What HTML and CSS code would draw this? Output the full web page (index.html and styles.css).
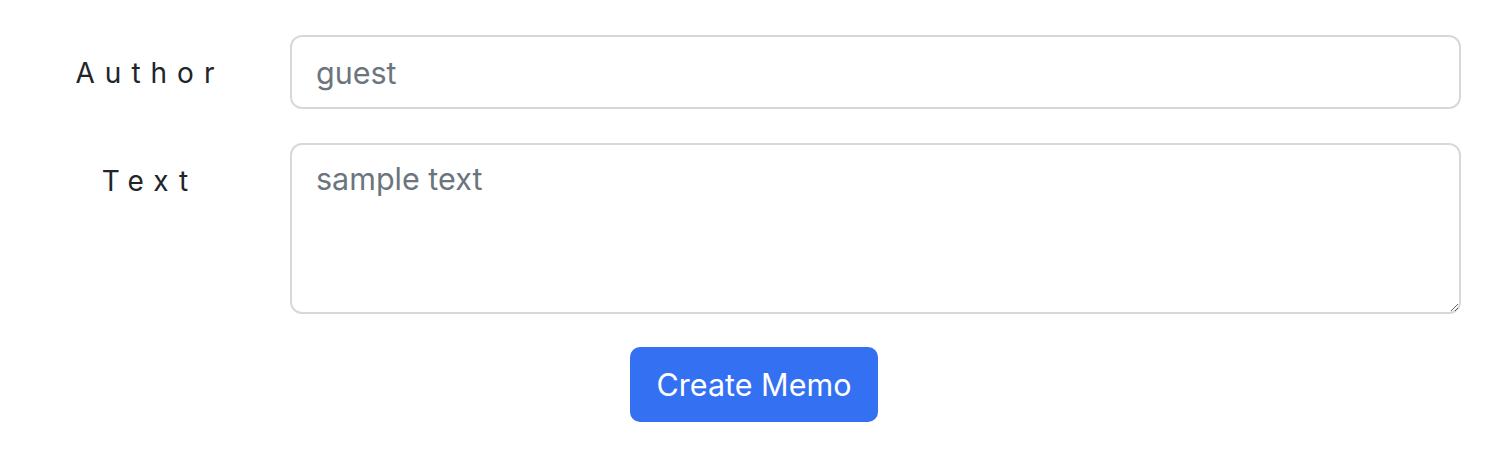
FILE: index.html
```html
<!DOCTYPE html>
<html lang="en">
<head>
<meta charset="utf-8">
<title>Create Memo</title>
<link rel="stylesheet" href="styles.css">
</head>
<body>
<form class="memo-form">
  <div class="row">
    <label class="label label-mid" for="author">Author</label>
    <input class="field" id="author" type="text" placeholder="guest">
  </div>
  <div class="row">
    <label class="label label-top" for="text">Text</label>
    <textarea class="field area" id="text" placeholder="sample text"></textarea>
  </div>
  <div class="actions">
    <button class="btn" type="button">Create Memo</button>
  </div>
</form>
</body>
</html>
```

FILE: styles.css
```css
html, body {
  margin: 0;
  padding: 0;
  background: #ffffff;
}

body {
  font-family: "Inter", "Liberation Sans", sans-serif;
  color: #212529;
}

.memo-form {
  display: flex;
  flex-direction: column;
  gap: 34px;
  padding: 35px 0 0 0;
}

.row {
  display: grid;
  grid-template-columns: 290px 1fr;
  padding-right: 45px;
}

.label {
  font-size: 28px;
  letter-spacing: 10px;
  text-indent: 10px;
  text-align: center;
  color: #212529;
  line-height: 1.5;
}

.label-mid {
  align-self: center;
  padding-top: 1px;
}

.label-top {
  padding-top: 17px;
}

.field {
  box-sizing: border-box;
  width: 100%;
  font-family: inherit;
  font-size: 30.5px;
  line-height: 1.5;
  color: #212529;
  background: #fff;
  border: 2px solid #d6d9dc;
  border-radius: 12px;
  padding: 12px 24px;
  outline: none;
  margin: 0;
}

.field::placeholder {
  color: #6c757d;
  opacity: 1;
}

input.field {
  height: 74px;
}

.area {
  height: 171px;
  resize: vertical;
  display: block;
  padding-top: 11px;
}

.actions {
  display: flex;
  justify-content: center;
  padding-left: 2px;
  margin-top: -1px;
}

.btn {
  font-family: inherit;
  font-size: 30.5px;
  line-height: 1.5;
  color: #ffffff;
  background: #3370f2;
  border: none;
  border-radius: 10px;
  width: 248px;
  height: 75px;
  padding: 0;
  cursor: pointer;
}
```
